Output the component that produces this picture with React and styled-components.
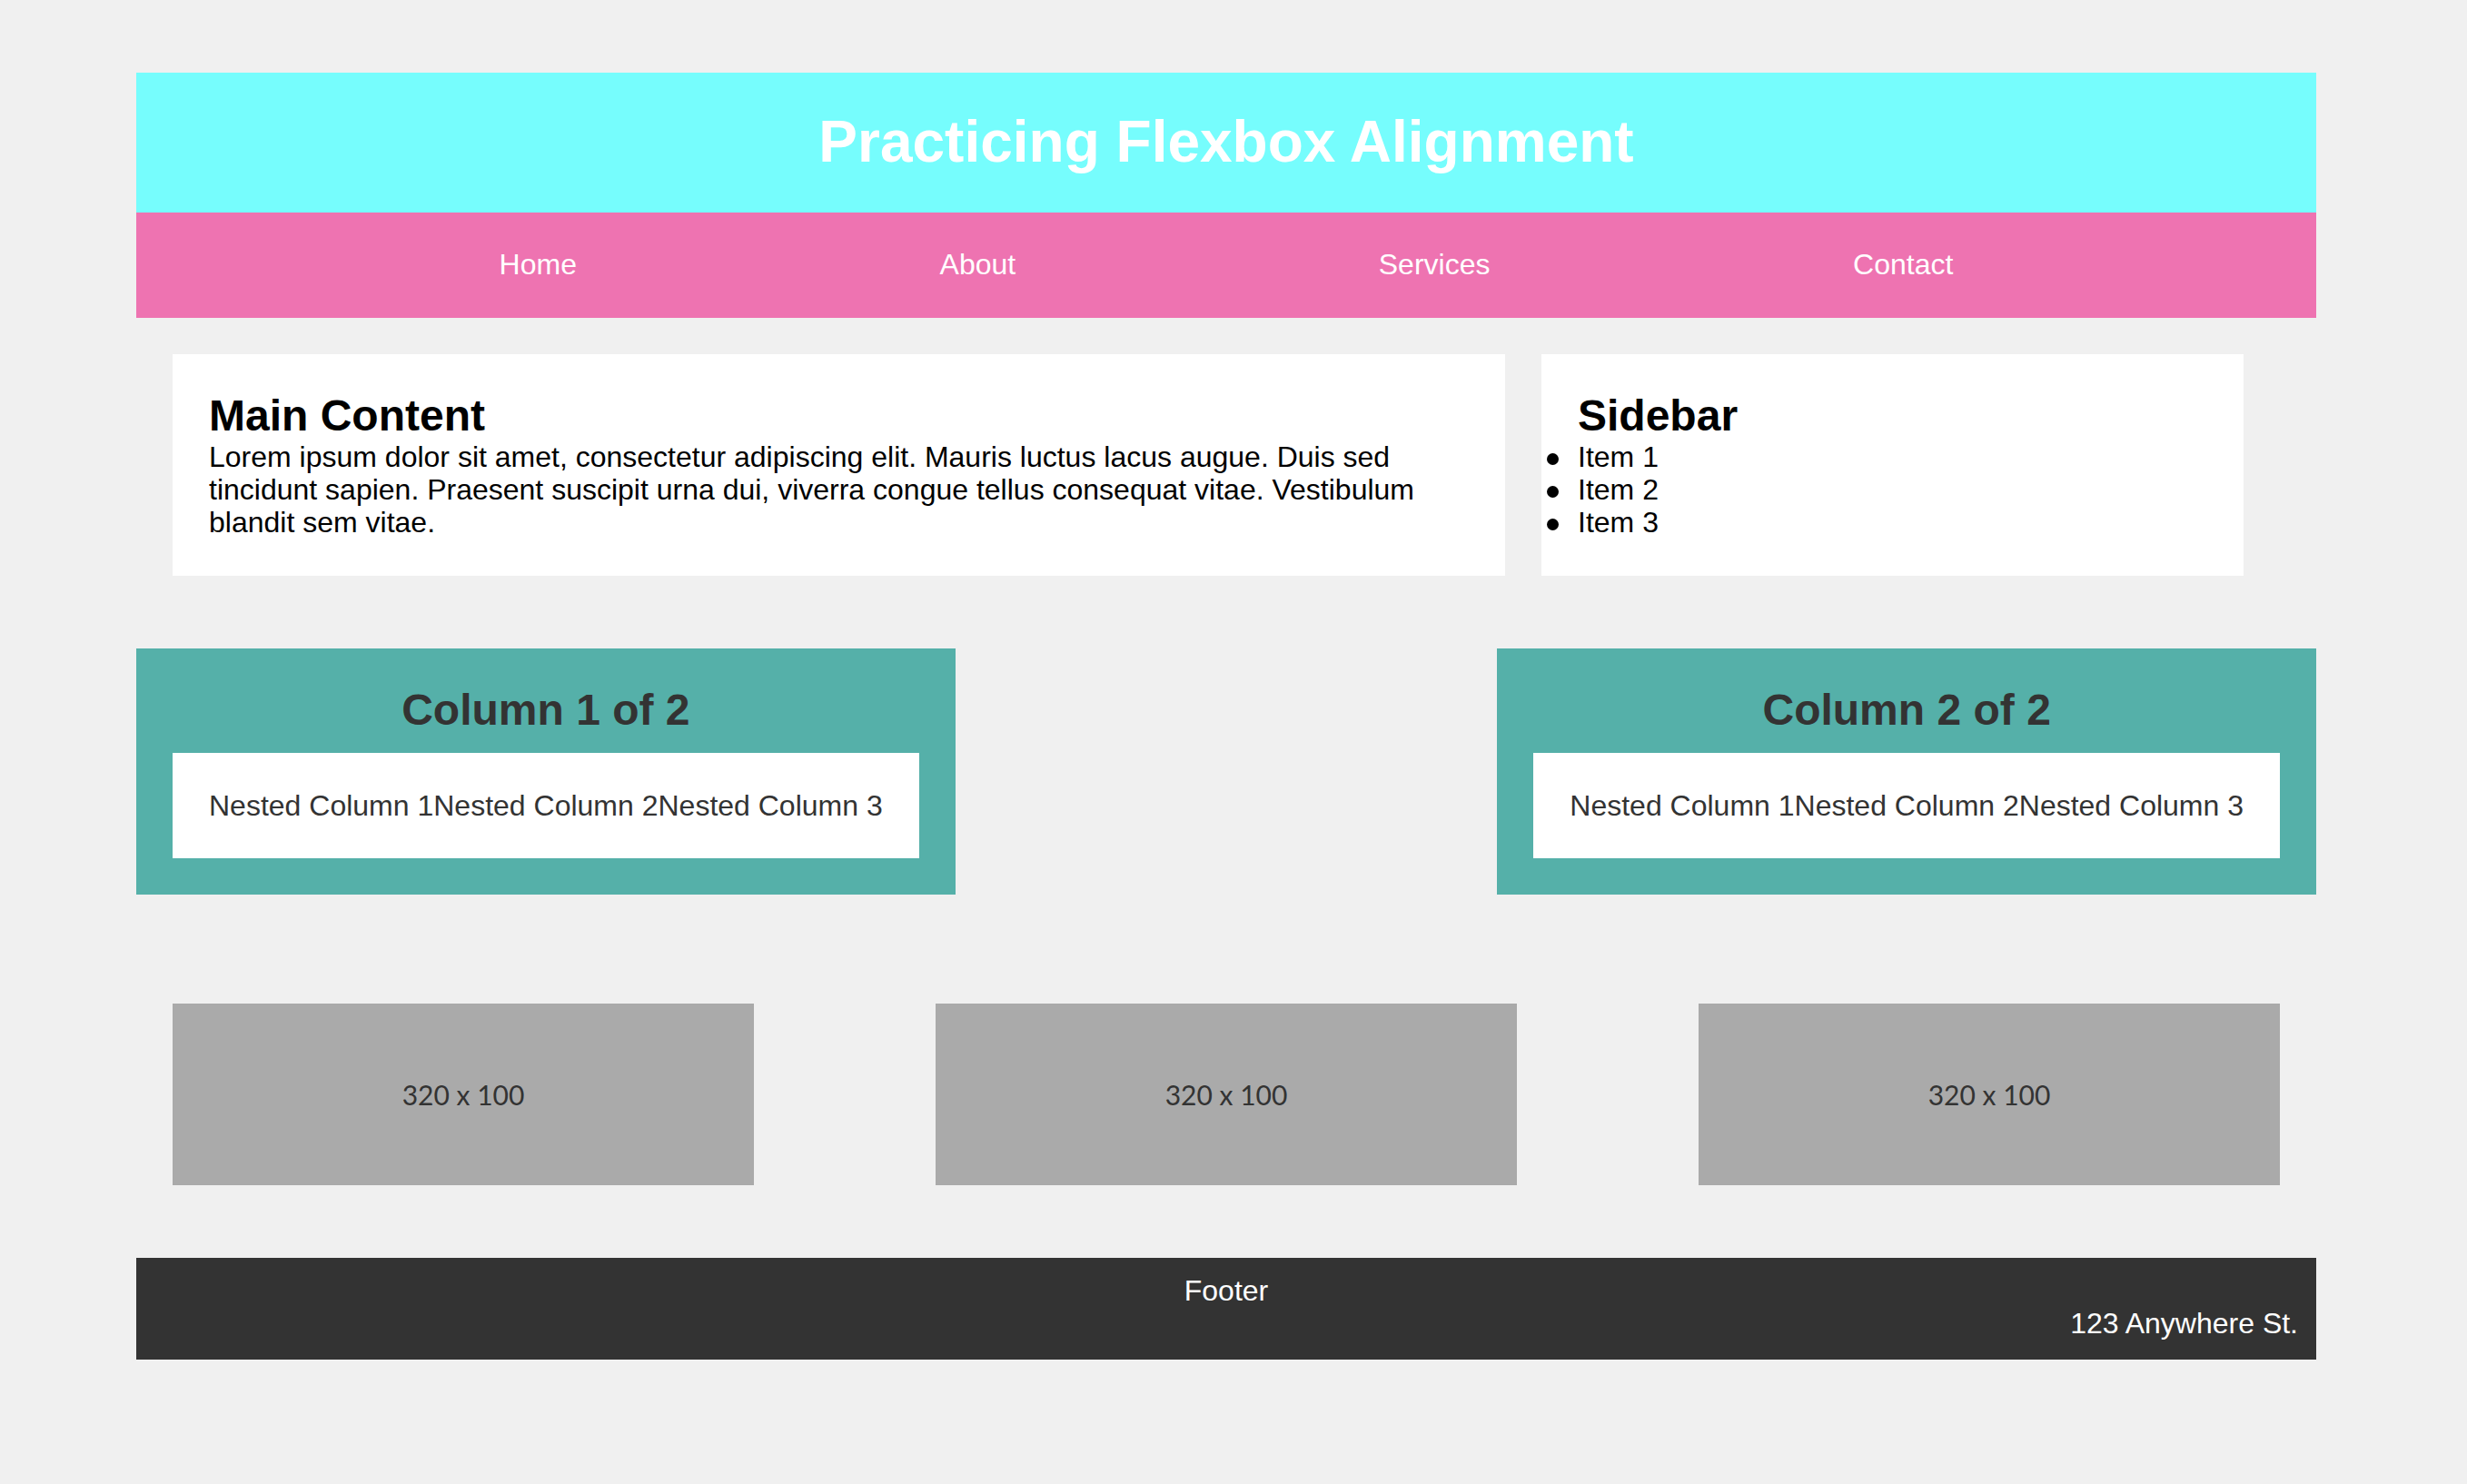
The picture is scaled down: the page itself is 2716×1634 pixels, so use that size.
import React from "react";
import styled, { createGlobalStyle } from "styled-components";

const GlobalStyle = createGlobalStyle`
  html, body {
    margin: 0;
    padding: 0;
    background: #f0f0f0;
  }
  body {
    font-family: "Liberation Sans", Arial, sans-serif;
    font-size: 32px;
    line-height: 36px;
  }
`;

const Page = styled.div`
  width: 2400px;
  margin: 80px 0 136px 150px;
`;

const Header = styled.header`
  background: #76fdfd;
  padding: 39px 0 41px;
  text-align: center;
`;

const Title = styled.h1`
  margin: 0;
  font-size: 64px;
  line-height: normal;
  font-weight: bold;
  color: #ffffff;
`;

const Nav = styled.nav`
  background: #ee73b1;
  padding: 39px 0 41px;
  display: flex;
  justify-content: space-evenly;
`;

const NavLink = styled.a`
  color: #ffffff;
  text-decoration: none;
  font-size: 32px;
`;

const ContentRow = styled.section`
  display: flex;
  gap: 40px;
  margin-top: 40px;
  padding-left: 40px;
`;

const Panel = styled.div`
  flex: 0 0 ${props => props.w}px;
  box-sizing: border-box;
  background: #ffffff;
  padding: 40px 40px 41px;
  color: #000000;
`;

const PanelTitle = styled.h2`
  margin: 0;
  font-size: 48px;
  line-height: normal;
  font-weight: bold;
`;

const Text = styled.p`
  margin: 0;
`;

const List = styled.ul`
  margin: 0;
  padding: 0;
  list-style: none;
`;

const Item = styled.li`
  &::before {
    content: "";
    display: inline-block;
    width: 13px;
    height: 13px;
    border-radius: 50%;
    background: #000000;
    margin: 0 21px 0 -34px;
    vertical-align: middle;
  }
`;

const ColumnRow = styled.section`
  display: flex;
  justify-content: space-between;
  margin-top: 80px;
`;

const Column = styled.div`
  flex: 0 0 auto;
  background: #55b0a9;
  padding: 40px;
  text-align: center;
  color: #333333;
`;

const ColumnTitle = styled.h2`
  margin: 0 0 20px;
  font-size: 48px;
  line-height: normal;
  font-weight: bold;
`;

const Nested = styled.div`
  display: flex;
  background: #ffffff;
  padding: 40px;
`;

const Gallery = styled.section`
  display: flex;
  justify-content: space-between;
  margin-top: 80px;
  padding: 40px;
`;

const Placeholder = styled.div`
  width: 640px;
  height: 200px;
  background: #aaaaaa;
  display: flex;
  align-items: center;
  justify-content: center;
  font-family: Lato, "Open Sans", sans-serif;
  font-size: 30px;
  color: #333333;
`;

const Footer = styled.footer`
  margin-top: 40px;
  background: #333333;
  color: #ffffff;
  padding: 18px 20px 22px;
`;

const FooterLine = styled.div`
  text-align: ${props => props.align};
`;

const links = ["Home", "About", "Services", "Contact"];
const nested = ["Nested Column 1", "Nested Column 2", "Nested Column 3"];

export default function App() {
  return (
    <>
      <GlobalStyle />
      <Page>
        <Header>
          <Title>Practicing Flexbox Alignment</Title>
        </Header>
        <Nav>
          {links.map(l => (
            <NavLink key={l} href="#">{l}</NavLink>
          ))}
        </Nav>

        <ContentRow>
          <Panel w={1467}>
            <PanelTitle>Main Content</PanelTitle>
            <Text>
              Lorem ipsum dolor sit amet, consectetur adipiscing elit. Mauris luctus lacus augue. Duis sed tincidunt sapien. Praesent suscipit urna dui, viverra congue tellus consequat vitae. Vestibulum blandit sem vitae.
            </Text>
          </Panel>
          <Panel w={773}>
            <PanelTitle>Sidebar</PanelTitle>
            <List>
              <Item>Item 1</Item>
              <Item>Item 2</Item>
              <Item>Item 3</Item>
            </List>
          </Panel>
        </ContentRow>

        <ColumnRow>
          {[1, 2].map(n => (
            <Column key={n}>
              <ColumnTitle>Column {n} of 2</ColumnTitle>
              <Nested>
                {nested.map(t => (
                  <div key={t}>{t}</div>
                ))}
              </Nested>
            </Column>
          ))}
        </ColumnRow>

        <Gallery>
          {[0, 1, 2].map(i => (
            <Placeholder key={i}>320 x 100</Placeholder>
          ))}
        </Gallery>

        <Footer>
          <FooterLine align="center">Footer</FooterLine>
          <FooterLine align="right">123 Anywhere St.</FooterLine>
        </Footer>
      </Page>
    </>
  );
}
